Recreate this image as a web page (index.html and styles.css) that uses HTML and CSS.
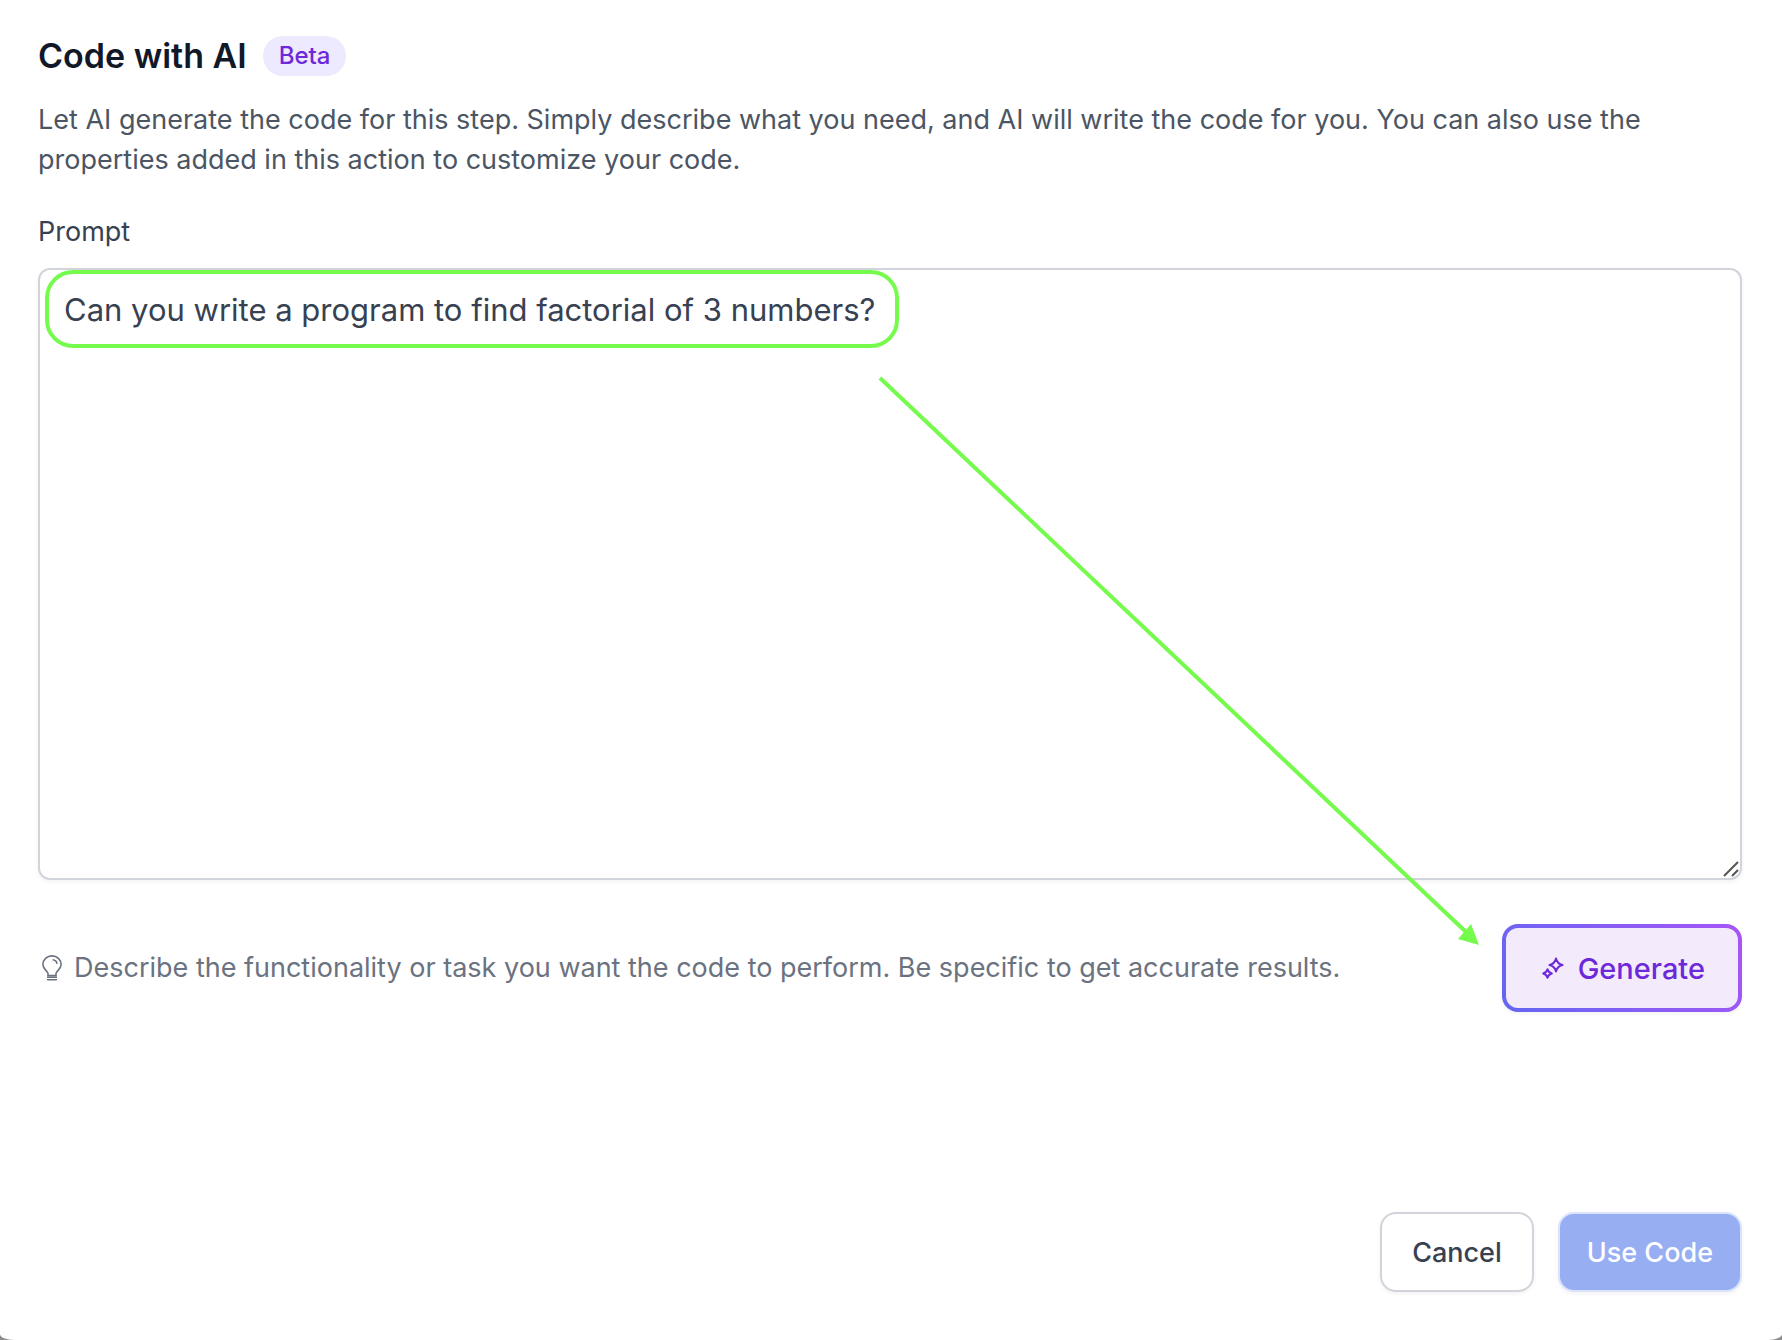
FILE: index.html
```
<!DOCTYPE html>
<html lang="en">
<head>
  <meta charset="UTF-8" />
  <meta name="viewport" content="width=device-width, initial-scale=1" />
  <title>Code with AI</title>
  <link rel="stylesheet" href="styles.css">
</head>
<body>
  <main class="dialog">
    <div class="dialog-header">
      <h1>Code with AI</h1>
      <span class="badge">Beta</span>
    </div>
    <p class="description">Let AI generate the code for this step. Simply describe what you need, and AI will write the code for you. You can also use the properties added in this action to customize your code.</p>

    <label class="prompt-label" for="prompt">Prompt</label>
    <div class="prompt-box">
      <textarea id="prompt" class="prompt">Can you write a program to find factorial of 3 numbers?</textarea>
      <svg class="grip" viewBox="0 0 16 16" aria-hidden="true">
        <path d="M1 15 15 1M9 15l6-6" />
      </svg>
      <!-- highlight and arrow to the button -->
      <svg class="annotation" aria-hidden="true">
        <rect x="9" y="4" width="850" height="74" rx="26" />
        <path d="M842 110 1428 664" />
        <path class="arrow-head" d="M1441 677 1433 656 1420 671Z" />
      </svg>
    </div>

    <div class="hint-row">
      <p class="hint">
        <svg class="bulb" viewBox="0 0 20 26" aria-hidden="true">
          <path d="M6 20.500v-2C6 16 .9 14.500 .9 9.600a9.100 8.700 0 0 1 18.200 0c0 4.900-5.100 6.400-5.100 8.900v2zM5 22.300h10M5 24.800h10M10.500 4.800c2.500.2 4.200 1.700 4.600 4" />
        </svg>
        Describe the functionality or task you want the code to perform. Be specific to get accurate results.
      </p>
      <button class="generate" type="button">
        <svg class="sparkles" viewBox="0 0 22 22" aria-hidden="true">
          <path d="M14 1.500Q15.200 6.800 20.500 8 15.200 9.200 14 14.500 12.800 9.200 7.500 8 12.800 6.800 14 1.500ZM5.500 12.200Q6.400 15.600 9.800 16.500 6.400 17.400 5.500 20.800 4.600 17.400 1.200 16.500 4.600 15.600 5.500 12.200Z" />
        </svg>
        Generate
      </button>
    </div>

    <div class="actions">
      <button class="btn btn-cancel" type="button">Cancel</button>
      <button class="btn btn-primary" type="button" disabled>Use Code</button>
    </div>
  </main>
</body>
</html>
```
FILE: styles.css
```
* { box-sizing: border-box; }
body {
  margin: 0;
  background: #8c8c8c;
  font-family: Inter, "Liberation Sans", sans-serif;
  font-size: 27px;
  line-height: 40px;
}
h1, p { margin: 0; }
button, textarea { font-family: inherit; }
svg { fill: none; }
.dialog {
  display: flex;
  flex-direction: column;
  min-height: 100vh;
  padding: 36px 40px 48px 38px;
  background: #fff;
  border-radius: 0 0 14px 14px / 0 0 6px 6px;
}
.dialog-header { display: flex; align-items: center; gap: 16px; }
h1 { font-size: 34px; font-weight: 600; line-height: 40px; color: #111827; }
.badge {
  padding: 0 16px;
  border-radius: 20px;
  background: #ede9fe;
  color: #6d28d9;
  font-size: 24px;
  font-weight: 500;
}
.description { margin-top: 24px; color: #4b5563; }
.prompt-label { margin-top: 32px; color: #374151; }
.prompt-box { position: relative; display: flex; margin-top: 16px; }
.prompt {
  width: 100%;
  height: 612px;
  padding: 16px 24px;
  border: 2px solid #d1d5db;
  border-radius: 12px;
  box-shadow: 0 2px 4px rgba(0, 0, 0, .05);
  color: #374151;
  font-size: 31px;
  line-height: 48px;
  resize: none;
  outline: none;
}
.grip {
  position: absolute;
  right: 3px;
  bottom: 3px;
  width: 16px;
  height: 16px;
  stroke: #555;
  stroke-width: 2;
}
.annotation {
  position: absolute;
  top: 0;
  left: 0;
  width: 100%;
  height: 100%;
  overflow: visible;
  pointer-events: none;
  stroke: #75fb4c;
  stroke-width: 4;
}
.arrow-head { fill: #75fb4c; stroke: none; }
.hint-row { display: flex; align-items: center; justify-content: space-between; margin-top: 44px; }
.hint { display: flex; align-items: center; gap: 12px; padding-left: 4px; color: #6b7280; }
.bulb { flex: none; width: 20px; height: 26px; stroke: #6b7280; stroke-width: 1.6; }
.generate {
  display: flex;
  align-items: center;
  gap: 14px;
  height: 88px;
  padding: 0 33px 0 36px;
  border: 4px solid transparent;
  border-radius: 16px;
  background: linear-gradient(#f3ebfc, #f3ebfc) padding-box, linear-gradient(60deg, #6366f1, #a855f7) border-box;
  box-shadow: 0 2px 4px rgba(0, 0, 0, .05);
  color: #6d28d9;
  font-size: 29px;
  font-weight: 500;
}
.sparkles { width: 22px; height: 22px; stroke: #6d28d9; stroke-width: 2; stroke-linejoin: round; }
.actions { display: flex; justify-content: flex-end; gap: 24px; margin-top: auto; }
.btn {
  height: 80px;
  border: 2px solid #d1d5db;
  border-radius: 16px;
  box-shadow: 0 2px 4px rgba(0, 0, 0, .05);
  font-size: 27px;
  font-weight: 500;
}
.btn-cancel { padding: 0 30px; background: #fff; color: #374151; }
.btn-primary { padding: 0 27px; border-color: #dbe4fd; background: #97aef3; color: #fff; }
```
